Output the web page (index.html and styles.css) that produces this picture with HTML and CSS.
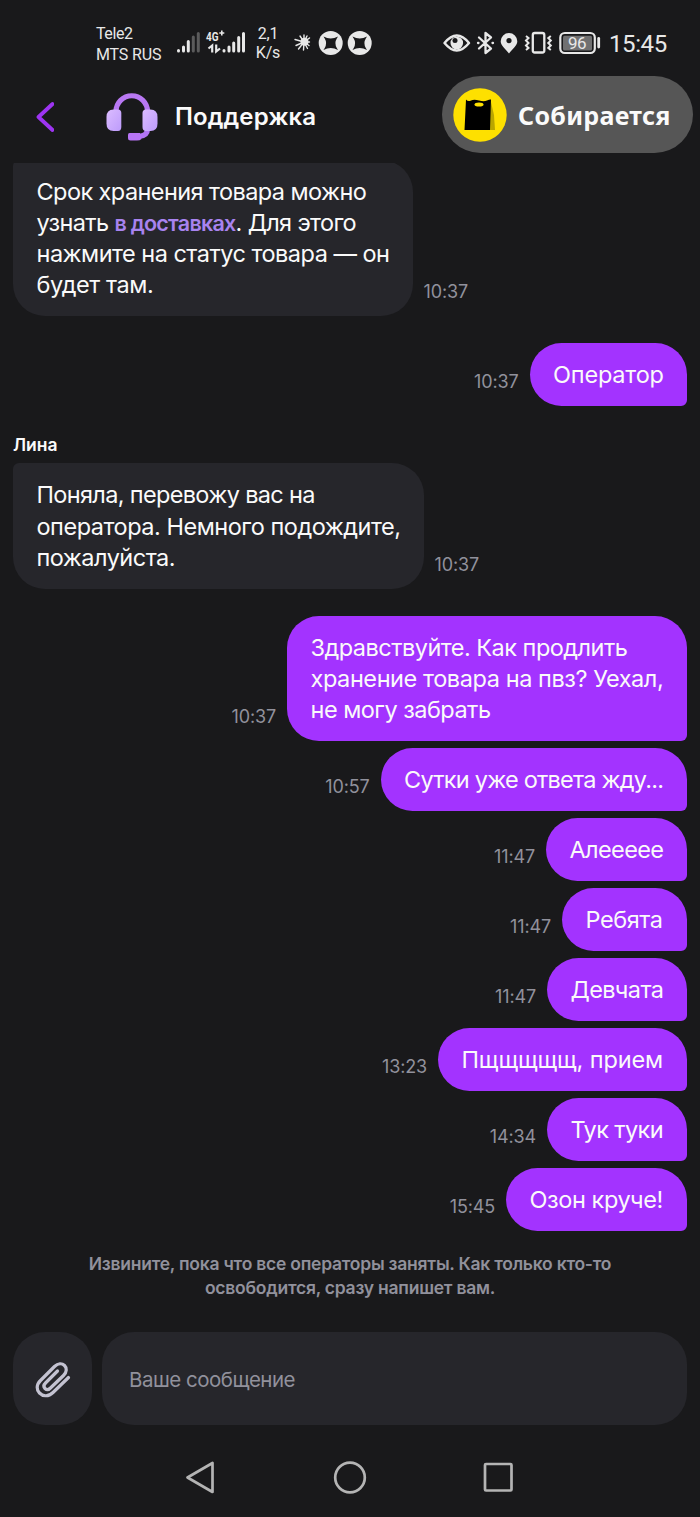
FILE: index.html
```html
<!DOCTYPE html>
<html lang="ru">
<head>
<meta charset="utf-8">
<title>Поддержка</title>
<link rel="stylesheet" href="styles.css">
</head>
<body>
<div class="phone">
  <div class="status">
    <div class="carriers"><span class="tele">Tele2</span><span class="mts">MTS RUS</span></div>
    <svg class="signals" width="72" height="28" viewBox="0 0 72 28">
      <g stroke="#e8e8e8" stroke-width="3" stroke-linecap="round">
        <path d="M2.500 21.500V22M7.500 18V22M12.300 12.500V22"/>
        <path d="M17.300 8V22M22.300 4.500V22" stroke="#5b5b5c"/>
        <path d="M48 21.500V22M53 18V22M57.700 14V22M62.700 8.500V22M67.500 4.500V22"/>
      </g>
      <g fill="none" stroke="#e8e8e8" stroke-width="2.200"><path d="M36.200 23.500V16.500L32.500 19.500M40.200 15.500V22.500L44 19.500"/></g>
      <text x="30" y="11.500" textLength="12.500" lengthAdjust="spacingAndGlyphs" class="net">4G</text>
      <path d="M43.300 4h5M45.800 1.500v5" stroke="#e8e8e8" stroke-width="1.600"/>
    </svg>
    <div class="speed"><span>2,1</span><span>K/s</span></div>
    <svg class="apps" width="80" height="28" viewBox="0 0 80 28">
      <g stroke="#e8e8e8" stroke-width="1.400" stroke-linecap="round"><path d="M11 13L2 10.500M11 13L3 16.500M11 13L5.500 20M11 13L10.500 21M11 13L14.500 19.500M11 13L16 16.500M11 13L16.500 13M11 13L16.500 9M11 13L14 7M11 13L11 6M11 13L7 7"/></g>
      <circle cx="11.500" cy="12.800" r="4" fill="#e8e8e8"/>
      <g id="mark"><circle cx="37.700" cy="14" r="12" fill="#e8e8e8"/><path d="M30.500 7.500Q37.700 11.500 45 7.500L43.800 9.500Q41 14 43.800 19L45 21Q37.700 17 30.500 21L31.700 19Q34.500 14 31.700 9.500Z" fill="#19191b"/></g>
      <use href="#mark" x="29"/>
    </svg>
    <svg class="system" width="161" height="28" viewBox="0 0 161 28">
      <path d="M1.500 14Q13.800 -1 26 14Q13.800 29 1.500 14Z" fill="none" stroke="#e8e8e8" stroke-width="2.400" stroke-linejoin="round"/>
      <circle cx="13.800" cy="14" r="6.300" fill="#e8e8e8"/><circle cx="12" cy="11.500" r="2.500" fill="#19191b"/>
      <path d="M36 8.500L48 19.500L42.500 24V4L48 8.500L36 19.500M35 14h.500M49.500 14h.500" fill="none" stroke="#e8e8e8" stroke-width="2.300" stroke-linejoin="round" stroke-linecap="round"/>
      <path fill-rule="evenodd" d="M66 4a8.300 8.300 0 0 1 8.300 8.300C74.300 17 69 20.500 66 24.500C63 20.500 57.700 17 57.700 12.300A8.300 8.300 0 0 1 66 4Zm0 5a2.600 2.600 0 1 0 0 5.200a2.600 2.600 0 0 0 0-5.200Z" fill="#e8e8e8"/>
      <rect x="89.800" y="4" width="11.500" height="19.500" rx="2" fill="none" stroke="#e8e8e8" stroke-width="2.300"/>
      <path d="M83 7l2.500 2-2.500 2.500 2.500 2.500-2.500 2.500 2.500 2.500-2.500 2M107.800 7l-2.500 2 2.500 2.500-2.500 2.500 2.500 2.500-2.500 2.500 2.500 2" fill="none" stroke="#e8e8e8" stroke-width="2"/>
      <rect x="117.300" y="4" width="34.500" height="20" rx="4.500" fill="none" stroke="#e8e8e8" stroke-width="2.200"/>
      <rect x="120" y="6.700" width="29" height="14.700" rx="1.500" fill="#707071"/>
      <path d="M155.700 9.500v8.500" stroke="#e8e8e8" stroke-width="2.800" stroke-linecap="round"/>
      <text x="125" y="20" textLength="18.500" class="battery">96</text>
    </svg>
    <span class="clock">15:45</span>
  </div>

  <header class="header">
    <svg class="back" width="20" height="32" viewBox="0 0 20 32"><path d="M18.500 3L4.500 16L18.500 29" fill="none" stroke="#9d34f2" stroke-width="3.800" stroke-linecap="round" stroke-linejoin="round"/></svg>
    <svg class="headset" width="54" height="50" viewBox="0 0 54 50">
      <defs>
        <linearGradient id="band" x1="0" y1="0" x2="0" y2="1"><stop offset="0" stop-color="#b978f3"/><stop offset="1" stop-color="#b275f5"/></linearGradient>
        <linearGradient id="ear" x1="0" y1="0" x2="1" y2="1"><stop offset="0" stop-color="#dbbcff"/><stop offset="1" stop-color="#bd9bfb"/></linearGradient>
      </defs>
      <path d="M10 20V18.500a15.500 15.500 0 0 1 31.500 0V20M41.500 36C41.500 41 38 43 33 43.500" fill="none" stroke="url(#band)" stroke-width="5.200"/>
      <path d="M23.500 40H34L35.500 46Q34 47.500 31 47.500H24.500Q22 47.500 22 45V42Q22 40 23.500 40Z" fill="#b875f5"/>
      <path d="M7.500 16.500H12Q15.300 16.500 15.300 20V34Q15.300 38 12 38H7.500Q.5 38 .5 30.500V24Q.5 16.500 7.500 16.500Z" fill="url(#ear)"/>
      <path d="M40 16.500H44.500Q51.500 16.500 51.500 24V30.500Q51.500 38 44.500 38H40Q36.500 38 36.500 34V20Q36.500 16.500 40 16.500Z" fill="url(#ear)"/>
    </svg>
    <h1 class="title">Поддержка</h1>
    <div class="order">
      <svg width="54" height="54" viewBox="0 0 54 54"><circle cx="27" cy="27" r="26.700" fill="#fee000"/><path d="M37.500 12L41 27L42 42H36Z" fill="#b9a500"/><path d="M13 11.500Q15 14 18 12.500Q21 11 26 12.500Q31 14 34 12.500Q37 11 38 11.500L37 42H11.500Z" fill="#000"/><ellipse cx="26" cy="16.500" rx="4.500" ry="2" fill="#fee000"/></svg>
      <span class="order-text">Собирается</span>
    </div>
  </header>

  <main class="chat">
    <div class="row first"><div class="bubble in w1"><span class="t6">Срок хранения товара можно</span><span class="t7">узнать <b>в доставках</b>. Для этого</span><span>нажмите на статус товара — он</span><span class="t4">будет там.</span></div><time>10:37</time></div>
    <div class="row mine"><time>10:37</time><div class="bubble out w2 t2">Оператор</div></div>
    <div class="name">Лина</div>
    <div class="row"><div class="bubble in w3"><span class="t7">Поняла, перевожу вас на</span><span class="t5">оператора. Немного подождите,</span><span>пожалуйста.</span></div><time>10:37</time></div>
    <div class="mine-group">
      <div class="row mine"><time>10:37</time><div class="bubble out w4"><span>Здравствуйте. Как продлить</span><span class="t4">хранение товара на пвз? Уехал,</span><span>не могу забрать</span></div></div>
      <div class="row mine"><time>10:57</time><div class="bubble out w5 t8">Сутки уже ответа жду...</div></div>
      <div class="row mine"><time>11:47</time><div class="bubble out w6 t6">Алеееее</div></div>
      <div class="row mine"><time>11:47</time><div class="bubble out w7 t4">Ребята</div></div>
      <div class="row mine"><time>11:47</time><div class="bubble out w8 t6">Девчата</div></div>
      <div class="row mine"><time>13:23</time><div class="bubble out w9 t1">Пщщщщщ, прием</div></div>
      <div class="row mine"><time>14:34</time><div class="bubble out w8 t6">Тук туки</div></div>
      <div class="row mine"><time>15:45</time><div class="bubble out w10 t4">Озон круче!</div></div>
    </div>
    <p class="notice">Извините, пока что все операторы заняты. Как только кто-то<br>освободится, сразу напишет вам.</p>
  </main>

  <div class="composer">
    <div class="attach"><svg width="36" height="38" viewBox="0 0 36 38"><path d="M33.500 17.500L18 32.500C13 37.500 7.500 36 4.500 33C1.500 30 1 25 5.500 20.500L19.500 6.500C23 3 27 3 29.500 5.500C32 8 32 12 28.500 15.500L15.500 28C13.500 30 11.500 30 10 28.500C8.500 27 8.500 25 10.500 23L22.500 11" fill="none" stroke="#c3c2d1" stroke-width="3.200" stroke-linecap="round" stroke-linejoin="round"/></svg></div>
    <div class="input">Ваше сообщение</div>
  </div>

  <nav class="nav">
    <svg width="328" height="34" viewBox="0 0 328 34" fill="none" stroke="#b4b4b4" stroke-width="2.700" stroke-linejoin="round"><path d="M1.500 17.500L26.500 3V32Z"/><circle cx="164" cy="17.500" r="14.800"/><rect x="299" y="4" width="26.500" height="26.500" rx="1"/></svg>
  </nav>
</div>
</body>
</html>
```

FILE: styles.css
```css
* { box-sizing: border-box; }
body { margin: 0; background: #19191b; color: #fafafa; font-family: Inter, "Noto Sans", sans-serif; }
.phone { width: 700px; height: 1517px; display: flex; flex-direction: column; overflow: hidden; background: #19191b; }
.status { height: 74px; flex: none; display: flex; align-items: flex-start; padding: 23px 0 0 96px; color: #e8e8e8; font-family: Roboto, sans-serif; white-space: nowrap; }
.carriers { width: 80px; display: flex; flex-direction: column; font-size: 16px; line-height: 21px; letter-spacing: -0.15px; }
.tele { letter-spacing: -0.4px; }
.signals { margin-top: 6px; }
.net { font: bold 12px Roboto, sans-serif; fill: #e8e8e8; }
.speed { width: 40px; font-size: 16px; line-height: 19px; letter-spacing: -0.2px; display: flex; flex-direction: column; align-items: center; margin-top: 1px; }
.apps { margin: 6px 0 0 5px; }
.system { margin: 6px 0 0 70px; }
.battery { font: 17px Roboto, sans-serif; fill: #e8e8e8; }
.clock { font-size: 24px; line-height: 28px; letter-spacing: -0.4px; margin: 7px 0 0 5px; }
.header { height: 89px; flex: none; display: flex; align-items: flex-start; padding: 2px 7px 0 34px; }
.back { margin-top: 25px; }
.headset { margin: 17px 0 0 52px; }
.title { margin: 27px 0 0 15px; font-size: 24px; line-height: 28px; font-weight: 600; letter-spacing: 0.1px; }
.order { width: 251px; height: 77px; margin-left: auto; border-radius: 39px; background: #565656; display: flex; align-items: center; padding-left: 11px; gap: 11px; }
.order-text { font: bold 25px/36px "Noto Sans", sans-serif; letter-spacing: 0.3px; }
.chat { height: 1169px; flex: none; overflow: hidden; padding: 0 13px; }
.row { display: flex; align-items: flex-end; gap: 10.500px; }
.row.first { margin-top: -3.500px; }
.mine { justify-content: flex-end; gap: 11px; }
.row.first + .mine { margin-top: 27px; }
time { font-size: 18px; line-height: 22px; margin-bottom: 13px; letter-spacing: -0.15px; color: #91919c; }
.bubble { padding: 16px 0 16px 23.500px; font-size: 23.500px; line-height: 31.100px; letter-spacing: -0.52px; white-space: nowrap; }
.bubble span { display: block; }
.bubble b { color: #a883ef; font-size: 21.500px; line-height: 1; font-weight: 600; letter-spacing: -0.74px; }
.t4 { letter-spacing: -0.42px; }
.t5 { letter-spacing: -0.48px; }
.t6 { letter-spacing: -0.58px; }
.t7 { letter-spacing: -0.66px; }
.in { background: #26262b; border-radius: 6px 32px 32px 32px; }
.out { background: #a333ff; border-radius: 32px 32px 6px 32px; }
.w1 { width: 400px; }
.w2 { width: 157.500px; }
.w3 { width: 411px; }
.w4 { width: 400px; }
.w5 { width: 306.500px; }
.w6 { width: 141px; }
.w7 { width: 125px; }
.w8 { width: 140px; }
.w9 { width: 249px; }
.w10 { width: 181px; }
.name { margin-top: 28px; height: 29.500px; font-size: 17.500px; line-height: 22px; font-weight: 600; }
.mine-group { margin-top: 26.800px; display: flex; flex-direction: column; gap: 6.900px; }
.bubble.t1 { letter-spacing: -0.12px; }
.bubble.t2 { letter-spacing: -0.2px; }
.bubble.t4 { letter-spacing: -0.42px; }
.bubble.t6 { letter-spacing: -0.62px; }
.bubble.t8 { letter-spacing: -0.76px; }
.notice { margin: 21px 0 0; text-align: center; font-size: 17.500px; line-height: 24px; font-weight: 600; letter-spacing: -0.24px; color: #91919c; }
.composer { height: 93px; flex: none; display: flex; gap: 10px; padding: 0 13px; }
.attach { width: 79px; border-radius: 32px; background: #26262b; display: flex; align-items: center; justify-content: center; }
.input { flex: 1; border-radius: 32px; background: #26262b; padding-left: 27px; font-size: 20.500px; line-height: 95px; letter-spacing: -0.5px; color: #91919c; }
.nav { height: 92px; flex: none; display: flex; justify-content: center; padding-top: 35px; }
```
